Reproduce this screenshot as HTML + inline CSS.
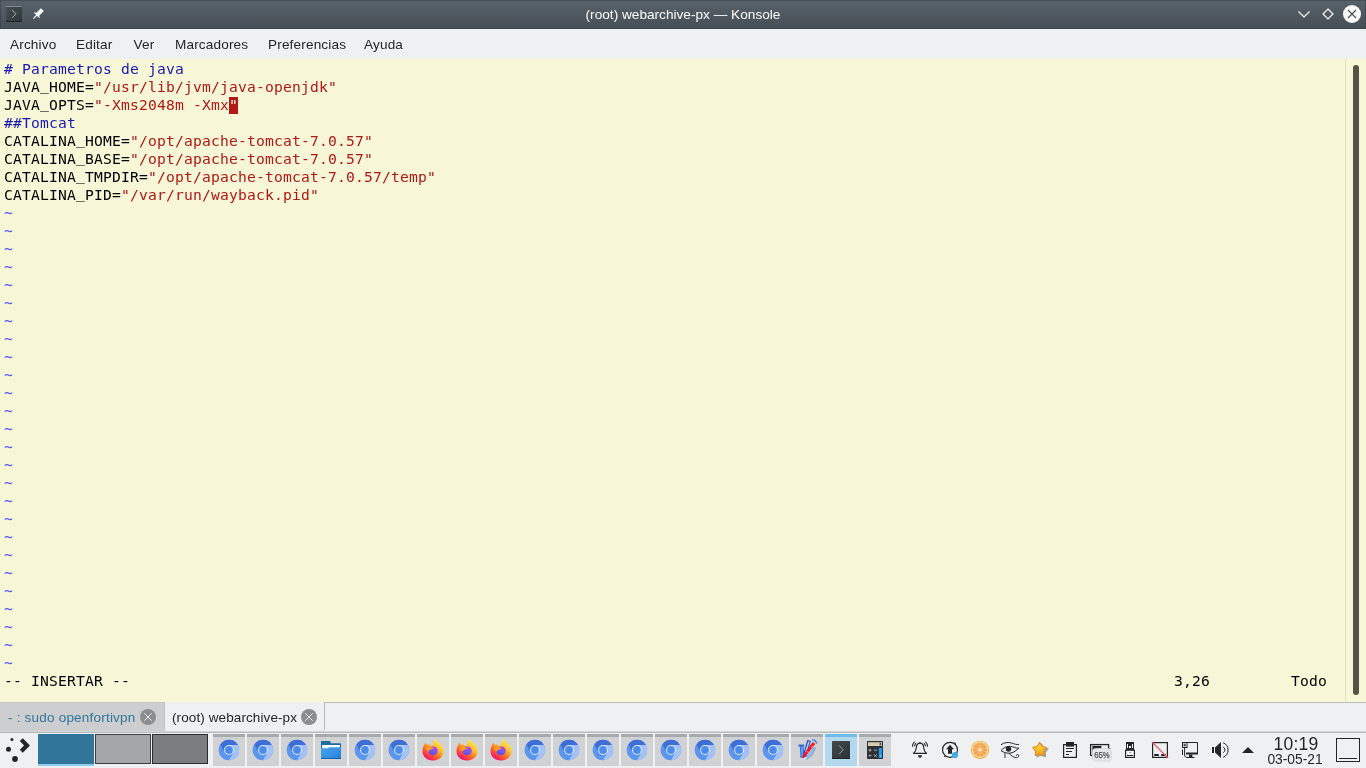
<!DOCTYPE html>
<html lang="es">
<head>
<meta charset="utf-8">
<title>(root) webarchive-px — Konsole</title>
<style>
html,body{margin:0;padding:0;}
body{width:1366px;height:768px;overflow:hidden;background:#eff0f1;position:relative;font-family:"Liberation Sans","DejaVu Sans",sans-serif;color:#232627;}
.abs{position:absolute;}
#menubar,#title,#text,.tabtxt,.clk{will-change:transform;}
svg{display:block;overflow:visible;}
#titlebar{left:0;top:0;width:1366px;height:29px;background:linear-gradient(#464f56 0px,#464f56 1px,#566069 1px,#566069 1px,#566069 3px,#475057 27px,#475057 28px,#3f474d 28px,#3f474d 29px);}
#title{left:0;top:1px;width:1366px;height:29px;line-height:28px;text-align:center;color:#fcfcfc;font-size:13.65px;white-space:nowrap;}
#menubar{left:0;top:29px;width:1366px;height:30px;background:#eff0f1;}
.menu{position:absolute;top:1px;height:30px;line-height:30px;font-size:13.6px;letter-spacing:0.15px;color:#232627;white-space:nowrap;}
#term{left:0;top:59px;width:1366px;height:643px;background:#f7f7d7;}
#text{left:4px;top:1px;margin:0;font-family:"DejaVu Sans Mono","Liberation Mono",monospace;font-size:14.667px;line-height:18px;color:#000;white-space:pre;letter-spacing:0.1761px;}
.c{color:#1818b2;}
.s{color:#b21818;}
.t{color:#5454ff;}
.cur{background:linear-gradient(#b21818,#b21818) no-repeat 0 1px;padding-bottom:1px;color:#f7f7d7;}
.u{position:relative;top:-2px;}
#sbline{left:1345px;top:0;width:1px;height:643px;background:#e2e2c5;}
#sbhandle{left:1353px;top:6px;width:6px;height:630px;border-radius:3px;background:#545446;}
#tabbar{left:0;top:702px;width:1366px;height:31px;background:#eff0f1;}
.tabtxt{position:absolute;top:1px;height:29px;line-height:29px;font-size:13.5px;white-space:nowrap;}
#panel{left:0;top:733px;width:1366px;height:35px;background:#eff0f1;}
.task{position:absolute;top:734px;width:32px;height:32px;background:#d1d2d3;border-top:3px solid #a8a9aa;box-sizing:border-box;}
.task.act{background:#b4d9ee;border-top-color:#6cbde9;}
</style>
</head>
<body>
<svg class="abs" style="left:0;top:0" width="0" height="0"><defs>
<linearGradient id="ffA" x1="0.85" y1="0.1" x2="0.25" y2="0.95"><stop offset="0" stop-color="#fff04a"/><stop offset="0.35" stop-color="#ffbd2f"/><stop offset="0.6" stop-color="#ff7a22"/><stop offset="0.85" stop-color="#ff3647"/><stop offset="1" stop-color="#e8107a"/></linearGradient>
<linearGradient id="ffB" x1="0.7" y1="0" x2="0.3" y2="1"><stop offset="0" stop-color="#c436e0"/><stop offset="0.5" stop-color="#7a5be8"/><stop offset="1" stop-color="#5b4be0"/></linearGradient>
<linearGradient id="ffC" x1="0" y1="0" x2="1" y2="1"><stop offset="0" stop-color="#ff8a16"/><stop offset="1" stop-color="#ffb82a"/></linearGradient>
<linearGradient id="foA" x1="0" y1="0" x2="1" y2="1"><stop offset="0" stop-color="#4aa3ec"/><stop offset="1" stop-color="#2383dd"/></linearGradient>
<linearGradient id="koA" x1="0" y1="0" x2="1" y2="1"><stop offset="0" stop-color="#434b4e"/><stop offset="1" stop-color="#2c3134"/></linearGradient>
</defs></svg>
<div id="titlebar" class="abs"></div>
<div class="abs" style="left:0;top:0;width:1px;height:28px;background:rgba(40,46,52,0.35)"></div>
<div class="abs" style="left:1365px;top:0;width:1px;height:28px;background:rgba(40,46,52,0.35)"></div>
<svg class="abs" style="left:0;top:0" width="60" height="29" viewBox="0 0 60 29">
<defs><linearGradient id="kt" x1="0" y1="0" x2="1" y2="1"><stop offset="0" stop-color="#495254"/><stop offset="1" stop-color="#2e3336"/></linearGradient></defs>
<rect x="6" y="6" width="16" height="16" fill="url(#kt)"/>
<rect x="6" y="6" width="16" height="1" fill="#818b88"/>
<rect x="6" y="21" width="16" height="1" fill="#202325"/>
<path d="M12.2 10L16 13.9L12.2 17.8" fill="none" stroke="#a4a9a9" stroke-width="1"/>
<g transform="translate(37 15) rotate(45)" fill="#fcfcfc"><rect x="-2.05" y="-7.6" width="4.1" height="7.6"/><rect x="-3.7" y="-0.6" width="7.4" height="1.2"/><rect x="-0.6" y="0" width="1.2" height="5.2"/></g>
</svg>
<div id="title" class="abs">(root) webarchive-px — Konsole</div>
<svg class="abs" style="left:1290px;top:0" width="76" height="29" viewBox="1290 0 76 29">
<path d="M1298.5 11.5L1304 17L1309.500 11.500" fill="none" stroke="#fcfcfc" stroke-width="1.2"/>
<path d="M1328 9L1333 14L1328 19L1323 14Z" fill="none" stroke="#fcfcfc" stroke-width="1.2"/>
<circle cx="1352" cy="14" r="9" fill="#fcfcfc"/>
<path d="M1348 10L1356 18M1356 10L1348 18" fill="none" stroke="#475057" stroke-width="1.2"/>
</svg>
<div id="menubar" class="abs">
<span class="menu" style="left:10px">Archivo</span>
<span class="menu" style="left:76px">Editar</span>
<span class="menu" style="left:133.500px">Ver</span>
<span class="menu" style="left:175px">Marcadores</span>
<span class="menu" style="left:268px">Preferencias</span>
<span class="menu" style="left:364px">Ayuda</span>
</div>
<div id="term" class="abs">
<pre id="text" class="abs"><span class="c"># Parametros de java</span>
JAVA<span class="u">_</span>HOME=<span class="s">"/usr/lib/jvm/java-openjdk"</span>
JAVA<span class="u">_</span>OPTS=<span class="s">"-Xms2048m -Xmx</span><span class="cur">"</span>
<span class="c">##Tomcat</span>
CATALINA<span class="u">_</span>HOME=<span class="s">"/opt/apache-tomcat-7.0.57"</span>
CATALINA<span class="u">_</span>BASE=<span class="s">"/opt/apache-tomcat-7.0.57"</span>
CATALINA<span class="u">_</span>TMPDIR=<span class="s">"/opt/apache-tomcat-7.0.57/temp"</span>
CATALINA<span class="u">_</span>PID=<span class="s">"/var/run/wayback.pid"</span>
<span class="t">~
~
~
~
~
~
~
~
~
~
~
~
~
~
~
~
~
~
~
~
~
~
~
~
~
~</span>
-- INSERTAR --                                                                                                                    3,26         Todo</pre>
<div id="sbline" class="abs"></div>
<div id="sbhandle" class="abs"></div>
</div>
<div id="tabbar" class="abs">
<div class="abs" style="left:0;top:0;width:1366px;height:1px;background:#bcbdbf"></div>
<div class="abs" style="left:0;top:0;width:165px;height:29px;background:#cdcecf;border-top:1px solid #c4c5c6;box-sizing:border-box"></div>
<div class="abs" style="left:164px;top:0;width:161px;height:29px;background:#eff0f1;border-radius:0 0 3px 3px;border-left:1px solid #c2c3c4;border-right:1px solid #b6b7b8;box-sizing:border-box"></div>
<div class="abs" style="left:0;top:29px;width:1366px;height:1px;background:#d4d5d6"></div>
<div class="abs" style="left:0;top:30px;width:1366px;height:1px;background:#b8b9ba"></div>
<span class="tabtxt" style="left:7.800px;color:#31759b;letter-spacing:0.21px">- : sudo openfortivpn</span>
<span class="tabtxt" style="left:172px;color:#232627;letter-spacing:0.1px">(root) webarchive-px</span>
<svg class="abs" style="left:140px;top:7px" width="16" height="16" viewBox="0 0 16 16"><circle cx="8" cy="8" r="8" fill="#8c8d8e"/><path d="M4.300 4.300L11.700 11.700M11.700 4.300L4.300 11.700" stroke="#f0f0f0" stroke-width="1"/></svg>
<svg class="abs" style="left:301px;top:7px" width="16" height="16" viewBox="0 0 16 16"><circle cx="8" cy="8" r="8" fill="#8c8d8e"/><path d="M4.300 4.300L11.700 11.700M11.700 4.300L4.300 11.700" stroke="#f0f0f0" stroke-width="1"/></svg>
</div>
<div id="panel" class="abs"></div>
<svg class="abs" style="left:0;top:733px" width="38" height="35" viewBox="0 733 38 35">
<circle cx="11.950" cy="739.500" r="1.500" fill="#232627"/><circle cx="8.500" cy="749.300" r="2.500" fill="#232627"/><circle cx="15" cy="759" r="2.900" fill="#232627"/>
<path d="M21.300 739.600L27 745.500L21.300 751.300" fill="none" stroke="#232627" stroke-width="4.200" stroke-linejoin="miter"/>
</svg>
<div class="abs" style="left:38px;top:734px;width:56px;height:30px;background:#31759b"></div>
<div class="abs" style="left:38px;top:764px;width:56px;height:2px;background:#8fcdee"></div>
<div class="abs" style="left:95px;top:734px;width:56px;height:30px;background:#a4a5a6;border:1px solid #3c3f41;box-sizing:border-box"></div>
<div class="abs" style="left:152px;top:734px;width:56px;height:30px;background:#7c7d80;border:1px solid #2a2d2f;box-sizing:border-box"></div>
<div class="task" style="left:213px"></div>
<svg class="abs" style="left:218px;top:739px" width="22" height="22" viewBox="-11 -11 22 22"><circle r="10.2" fill="#5c95ee"/><path d="M-8.75 -5.25A10.2 10.2 0 0 1 8.92 -4.95L-0.02 -4.97L0 0L-4.30 2.50Z" fill="#3e6fd8"/><path d="M8.92 -4.95A10.2 10.2 0 0 1 -0.17 10.20L4.32 2.47L0 0L-0.02 -4.97Z" fill="#a4c2f7"/><path d="M-0.17 10.20A10.2 10.2 0 0 1 -8.75 -5.25L-4.30 2.50L0 0L4.32 2.47Z" fill="#5c95ee"/><circle r="4.9" fill="#e4ecfb"/><circle r="3.9" fill="#4a8bf0"/></svg>
<div class="task" style="left:247px"></div>
<svg class="abs" style="left:252px;top:739px" width="22" height="22" viewBox="-11 -11 22 22"><circle r="10.2" fill="#5c95ee"/><path d="M-8.75 -5.25A10.2 10.2 0 0 1 8.92 -4.95L-0.02 -4.97L0 0L-4.30 2.50Z" fill="#3e6fd8"/><path d="M8.92 -4.95A10.2 10.2 0 0 1 -0.17 10.20L4.32 2.47L0 0L-0.02 -4.97Z" fill="#a4c2f7"/><path d="M-0.17 10.20A10.2 10.2 0 0 1 -8.75 -5.25L-4.30 2.50L0 0L4.32 2.47Z" fill="#5c95ee"/><circle r="4.9" fill="#e4ecfb"/><circle r="3.9" fill="#4a8bf0"/></svg>
<div class="task" style="left:281px"></div>
<svg class="abs" style="left:286px;top:739px" width="22" height="22" viewBox="-11 -11 22 22"><circle r="10.2" fill="#5c95ee"/><path d="M-8.75 -5.25A10.2 10.2 0 0 1 8.92 -4.95L-0.02 -4.97L0 0L-4.30 2.50Z" fill="#3e6fd8"/><path d="M8.92 -4.95A10.2 10.2 0 0 1 -0.17 10.20L4.32 2.47L0 0L-0.02 -4.97Z" fill="#a4c2f7"/><path d="M-0.17 10.20A10.2 10.2 0 0 1 -8.75 -5.25L-4.30 2.50L0 0L4.32 2.47Z" fill="#5c95ee"/><circle r="4.9" fill="#e4ecfb"/><circle r="3.9" fill="#4a8bf0"/></svg>
<div class="task" style="left:315px"></div>
<svg class="abs" style="left:320px;top:739px" width="22" height="22" viewBox="0 0 22 22"><path d="M1 2H10L11 4.2H21V20H1Z" fill="#1f6da3"/><rect x="2.2" y="6" width="17.6" height="4" fill="#ffffff"/><path d="M1 9.2H8L9 8.2H21V20H1Z" fill="url(#foA)"/><rect x="1" y="19" width="20" height="1" fill="#0f5fa8"/></svg>
<div class="task" style="left:349px"></div>
<svg class="abs" style="left:354px;top:739px" width="22" height="22" viewBox="-11 -11 22 22"><circle r="10.2" fill="#5c95ee"/><path d="M-8.75 -5.25A10.2 10.2 0 0 1 8.92 -4.95L-0.02 -4.97L0 0L-4.30 2.50Z" fill="#3e6fd8"/><path d="M8.92 -4.95A10.2 10.2 0 0 1 -0.17 10.20L4.32 2.47L0 0L-0.02 -4.97Z" fill="#a4c2f7"/><path d="M-0.17 10.20A10.2 10.2 0 0 1 -8.75 -5.25L-4.30 2.50L0 0L4.32 2.47Z" fill="#5c95ee"/><circle r="4.9" fill="#e4ecfb"/><circle r="3.9" fill="#4a8bf0"/></svg>
<div class="task" style="left:383px"></div>
<svg class="abs" style="left:388px;top:739px" width="22" height="22" viewBox="-11 -11 22 22"><circle r="10.2" fill="#5c95ee"/><path d="M-8.75 -5.25A10.2 10.2 0 0 1 8.92 -4.95L-0.02 -4.97L0 0L-4.30 2.50Z" fill="#3e6fd8"/><path d="M8.92 -4.95A10.2 10.2 0 0 1 -0.17 10.20L4.32 2.47L0 0L-0.02 -4.97Z" fill="#a4c2f7"/><path d="M-0.17 10.20A10.2 10.2 0 0 1 -8.75 -5.25L-4.30 2.50L0 0L4.32 2.47Z" fill="#5c95ee"/><circle r="4.9" fill="#e4ecfb"/><circle r="3.9" fill="#4a8bf0"/></svg>
<div class="task" style="left:417px"></div>
<svg class="abs" style="left:422px;top:738.5px" width="22" height="22" viewBox="0 0 22 22"><g transform="translate(11 11) scale(1.09 1) translate(-11.2 -11)"><path d="M11.6 4.2C11.2 2.6 12.2 1 13.6 0.4C14.6 2.6 17 3.6 18.8 6C20.6 8.4 21.4 11.4 20.6 14.4C19.4 18.8 15.4 21.4 11 21.4C5.6 21.4 1.6 17.4 1.6 12.2C1.6 10.2 1.8 8.6 2.6 7C3 5.6 3.8 4.4 4.6 3.8C4.8 4.8 5.2 5.6 5.8 6.2C6.4 5.4 7.2 5 8 5.2C8.4 6.2 9.2 7 10.4 7.2Z" fill="url(#ffA)"/><circle cx="11.2" cy="11.8" r="4.4" fill="url(#ffB)"/><path d="M4.2 8.4C5.6 7.4 7.4 7.4 8.6 8C9.6 8.6 10.6 8.8 12 8.8C11.4 9.8 10.2 10.2 9 10.6C8 11 7.4 11.8 7.2 12.8C6.4 11.4 5.4 10.2 3.8 10.2Z" fill="url(#ffC)"/></g></svg>
<div class="task" style="left:451px"></div>
<svg class="abs" style="left:456px;top:738.5px" width="22" height="22" viewBox="0 0 22 22"><g transform="translate(11 11) scale(1.09 1) translate(-11.2 -11)"><path d="M11.6 4.2C11.2 2.6 12.2 1 13.6 0.4C14.6 2.6 17 3.6 18.8 6C20.6 8.4 21.4 11.4 20.6 14.4C19.4 18.8 15.4 21.4 11 21.4C5.6 21.4 1.6 17.4 1.6 12.2C1.6 10.2 1.8 8.6 2.6 7C3 5.6 3.8 4.4 4.6 3.8C4.8 4.8 5.2 5.6 5.8 6.2C6.4 5.4 7.2 5 8 5.2C8.4 6.2 9.2 7 10.4 7.2Z" fill="url(#ffA)"/><circle cx="11.2" cy="11.8" r="4.4" fill="url(#ffB)"/><path d="M4.2 8.4C5.6 7.4 7.4 7.4 8.6 8C9.6 8.6 10.6 8.8 12 8.8C11.4 9.8 10.2 10.2 9 10.6C8 11 7.4 11.8 7.2 12.8C6.4 11.4 5.4 10.2 3.8 10.2Z" fill="url(#ffC)"/></g></svg>
<div class="task" style="left:485px"></div>
<svg class="abs" style="left:490px;top:738.5px" width="22" height="22" viewBox="0 0 22 22"><g transform="translate(11 11) scale(1.09 1) translate(-11.2 -11)"><path d="M11.6 4.2C11.2 2.6 12.2 1 13.6 0.4C14.6 2.6 17 3.6 18.8 6C20.6 8.4 21.4 11.4 20.6 14.4C19.4 18.8 15.4 21.4 11 21.4C5.6 21.4 1.6 17.4 1.6 12.2C1.6 10.2 1.8 8.6 2.6 7C3 5.6 3.8 4.4 4.6 3.8C4.8 4.8 5.2 5.6 5.8 6.2C6.4 5.4 7.2 5 8 5.2C8.4 6.2 9.2 7 10.4 7.2Z" fill="url(#ffA)"/><circle cx="11.2" cy="11.8" r="4.4" fill="url(#ffB)"/><path d="M4.2 8.4C5.6 7.4 7.4 7.4 8.6 8C9.6 8.6 10.6 8.8 12 8.8C11.4 9.8 10.2 10.2 9 10.6C8 11 7.4 11.8 7.2 12.8C6.4 11.4 5.4 10.2 3.8 10.2Z" fill="url(#ffC)"/></g></svg>
<div class="task" style="left:519px"></div>
<svg class="abs" style="left:524px;top:739px" width="22" height="22" viewBox="-11 -11 22 22"><circle r="10.2" fill="#5c95ee"/><path d="M-8.75 -5.25A10.2 10.2 0 0 1 8.92 -4.95L-0.02 -4.97L0 0L-4.30 2.50Z" fill="#3e6fd8"/><path d="M8.92 -4.95A10.2 10.2 0 0 1 -0.17 10.20L4.32 2.47L0 0L-0.02 -4.97Z" fill="#a4c2f7"/><path d="M-0.17 10.20A10.2 10.2 0 0 1 -8.75 -5.25L-4.30 2.50L0 0L4.32 2.47Z" fill="#5c95ee"/><circle r="4.9" fill="#e4ecfb"/><circle r="3.9" fill="#4a8bf0"/></svg>
<div class="task" style="left:553px"></div>
<svg class="abs" style="left:558px;top:739px" width="22" height="22" viewBox="-11 -11 22 22"><circle r="10.2" fill="#5c95ee"/><path d="M-8.75 -5.25A10.2 10.2 0 0 1 8.92 -4.95L-0.02 -4.97L0 0L-4.30 2.50Z" fill="#3e6fd8"/><path d="M8.92 -4.95A10.2 10.2 0 0 1 -0.17 10.20L4.32 2.47L0 0L-0.02 -4.97Z" fill="#a4c2f7"/><path d="M-0.17 10.20A10.2 10.2 0 0 1 -8.75 -5.25L-4.30 2.50L0 0L4.32 2.47Z" fill="#5c95ee"/><circle r="4.9" fill="#e4ecfb"/><circle r="3.9" fill="#4a8bf0"/></svg>
<div class="task" style="left:587px"></div>
<svg class="abs" style="left:592px;top:739px" width="22" height="22" viewBox="-11 -11 22 22"><circle r="10.2" fill="#5c95ee"/><path d="M-8.75 -5.25A10.2 10.2 0 0 1 8.92 -4.95L-0.02 -4.97L0 0L-4.30 2.50Z" fill="#3e6fd8"/><path d="M8.92 -4.95A10.2 10.2 0 0 1 -0.17 10.20L4.32 2.47L0 0L-0.02 -4.97Z" fill="#a4c2f7"/><path d="M-0.17 10.20A10.2 10.2 0 0 1 -8.75 -5.25L-4.30 2.50L0 0L4.32 2.47Z" fill="#5c95ee"/><circle r="4.9" fill="#e4ecfb"/><circle r="3.9" fill="#4a8bf0"/></svg>
<div class="task" style="left:621px"></div>
<svg class="abs" style="left:626px;top:739px" width="22" height="22" viewBox="-11 -11 22 22"><circle r="10.2" fill="#5c95ee"/><path d="M-8.75 -5.25A10.2 10.2 0 0 1 8.92 -4.95L-0.02 -4.97L0 0L-4.30 2.50Z" fill="#3e6fd8"/><path d="M8.92 -4.95A10.2 10.2 0 0 1 -0.17 10.20L4.32 2.47L0 0L-0.02 -4.97Z" fill="#a4c2f7"/><path d="M-0.17 10.20A10.2 10.2 0 0 1 -8.75 -5.25L-4.30 2.50L0 0L4.32 2.47Z" fill="#5c95ee"/><circle r="4.9" fill="#e4ecfb"/><circle r="3.9" fill="#4a8bf0"/></svg>
<div class="task" style="left:655px"></div>
<svg class="abs" style="left:660px;top:739px" width="22" height="22" viewBox="-11 -11 22 22"><circle r="10.2" fill="#5c95ee"/><path d="M-8.75 -5.25A10.2 10.2 0 0 1 8.92 -4.95L-0.02 -4.97L0 0L-4.30 2.50Z" fill="#3e6fd8"/><path d="M8.92 -4.95A10.2 10.2 0 0 1 -0.17 10.20L4.32 2.47L0 0L-0.02 -4.97Z" fill="#a4c2f7"/><path d="M-0.17 10.20A10.2 10.2 0 0 1 -8.75 -5.25L-4.30 2.50L0 0L4.32 2.47Z" fill="#5c95ee"/><circle r="4.9" fill="#e4ecfb"/><circle r="3.9" fill="#4a8bf0"/></svg>
<div class="task" style="left:689px"></div>
<svg class="abs" style="left:694px;top:739px" width="22" height="22" viewBox="-11 -11 22 22"><circle r="10.2" fill="#5c95ee"/><path d="M-8.75 -5.25A10.2 10.2 0 0 1 8.92 -4.95L-0.02 -4.97L0 0L-4.30 2.50Z" fill="#3e6fd8"/><path d="M8.92 -4.95A10.2 10.2 0 0 1 -0.17 10.20L4.32 2.47L0 0L-0.02 -4.97Z" fill="#a4c2f7"/><path d="M-0.17 10.20A10.2 10.2 0 0 1 -8.75 -5.25L-4.30 2.50L0 0L4.32 2.47Z" fill="#5c95ee"/><circle r="4.9" fill="#e4ecfb"/><circle r="3.9" fill="#4a8bf0"/></svg>
<div class="task" style="left:723px"></div>
<svg class="abs" style="left:728px;top:739px" width="22" height="22" viewBox="-11 -11 22 22"><circle r="10.2" fill="#5c95ee"/><path d="M-8.75 -5.25A10.2 10.2 0 0 1 8.92 -4.95L-0.02 -4.97L0 0L-4.30 2.50Z" fill="#3e6fd8"/><path d="M8.92 -4.95A10.2 10.2 0 0 1 -0.17 10.20L4.32 2.47L0 0L-0.02 -4.97Z" fill="#a4c2f7"/><path d="M-0.17 10.20A10.2 10.2 0 0 1 -8.75 -5.25L-4.30 2.50L0 0L4.32 2.47Z" fill="#5c95ee"/><circle r="4.9" fill="#e4ecfb"/><circle r="3.9" fill="#4a8bf0"/></svg>
<div class="task" style="left:757px"></div>
<svg class="abs" style="left:762px;top:739px" width="22" height="22" viewBox="-11 -11 22 22"><circle r="10.2" fill="#5c95ee"/><path d="M-8.75 -5.25A10.2 10.2 0 0 1 8.92 -4.95L-0.02 -4.97L0 0L-4.30 2.50Z" fill="#3e6fd8"/><path d="M8.92 -4.95A10.2 10.2 0 0 1 -0.17 10.20L4.32 2.47L0 0L-0.02 -4.97Z" fill="#a4c2f7"/><path d="M-0.17 10.20A10.2 10.2 0 0 1 -8.75 -5.25L-4.30 2.50L0 0L4.32 2.47Z" fill="#5c95ee"/><circle r="4.9" fill="#e4ecfb"/><circle r="3.9" fill="#4a8bf0"/></svg>
<div class="task" style="left:791px"></div>
<svg class="abs" style="left:796px;top:739px" width="22" height="22" viewBox="0 0 22 22"><g fill="none" stroke-linecap="butt"><path d="M16.200 0.700C18.400 0.900 20.300 2.500 20.700 4.700" stroke="#4a7fe0" stroke-width="1.500"/><path d="M18.300 8.300C17 12.800 13.700 17 9.700 19.700" stroke="#4e5f78" stroke-width="3.300" opacity="0.55"/><path d="M17.900 8C16.600 12.400 13.400 16.600 9.400 19.300" stroke="#8cbdf5" stroke-width="2.700"/><path d="M2.400 6.500H8.200" stroke="#3468dc" stroke-width="1.900"/><path d="M5.500 6.500C6 10 6.200 14 6.300 18.600" stroke="#2f63d8" stroke-width="3.700"/><path d="M5.500 7.500C6 10 6.200 14 6.300 17.800" stroke="#62a0f0" stroke-width="1.900"/><path d="M13.100 1.500L8.200 18" stroke="#2346c8" stroke-width="3.700"/><path d="M12.900 2.600L8.600 16.800" stroke="#bcd6fb" stroke-width="1.500"/><path d="M7.500 19.200L9.400 15.200L18 4" stroke="#f21824" stroke-width="3" stroke-linejoin="round"/><path d="M15.400 8.400L16.600 7.400M11 12.400L11.800 13.400" stroke="#fbd0d4" stroke-width="0.900"/></g><path d="M7.200 19.900L9.800 20.300L11.400 18.200L8.800 18Z" fill="#c4e8fb"/></svg>
<div class="task act" style="left:825px"></div>
<svg class="abs" style="left:830px;top:739px" width="22" height="22" viewBox="0 0 22 22"><rect x="2" y="2" width="18" height="18" rx="0.8" fill="url(#koA)"/><rect x="2" y="19" width="18" height="1" fill="#1d2022"/><path d="M9 6.5L13.2 10.8L9 15.2" fill="none" stroke="#a4a9a9" stroke-width="0.900"/></svg>
<div class="task" style="left:859px"></div>
<svg class="abs" style="left:864px;top:739px" width="22" height="22" viewBox="0 0 22 22"><rect x="3" y="2" width="16" height="18" rx="0.8" fill="#2e3236"/><rect x="4" y="3.2" width="14" height="3.8" fill="#d6ccb4"/><rect x="15.6" y="3.8" width="1.6" height="2.6" fill="#4a4a44"/><rect x="14.8" y="9" width="3.2" height="10" fill="#1d99f3"/><rect x="15.8" y="16.2" width="1.2" height="1.2" fill="#bfe3fb"/><path d="M4.6 11.2H7.4M6 9.8V12.6M10 11.2H12.8M4.6 16.6H7.4M6 15.4V15.9M6 17.3V17.8M10.2 15.4L12.6 17.8M12.6 15.4L10.2 17.8" stroke="#c9cdcd" stroke-width="0.800" fill="none"/></svg>
<svg class="abs" style="left:900px;top:733px" width="466" height="35" viewBox="900 733 466 35">
<g fill="none" stroke="#232627" stroke-width="1.150">
<path d="M913.500 753.300C915.600 751.600 916.200 749.600 916.400 747.200C916.600 744.600 918 743.100 920 743.100C922 743.100 923.400 744.600 923.600 747.200C923.800 749.600 924.400 751.600 926.500 753.300Z" stroke-linejoin="round"/>
<path d="M914.700 746.300C914.700 745 915.200 743.900 916 743.100M912.500 746.700C912.500 744.700 913.300 742.900 914.600 741.600M925.300 746.300C925.300 745 924.800 743.900 924 743.100M927.500 746.700C927.500 744.700 926.700 742.900 925.400 741.600" stroke-width="1.100"/>
</g>
<path d="M919.100 743.200L920 741.800L920.900 743.200Z" fill="#232627"/>
<path d="M918 755.300H922A2 2.500 0 0 1 918 755.300Z" fill="#232627"/>
<circle cx="950" cy="749.800" r="7.500" fill="none" stroke="#232627" stroke-width="1.150"/>
<path d="M954.200 742.200L956.200 743L954.600 744.400ZM945.800 757.400L943.800 756.600L945.400 755.200Z" fill="#232627"/>
<path d="M950 744.800L954 749.200H952V753.800H948V749.200H946Z" fill="#232627"/>
<circle cx="955" cy="755" r="3.100" fill="#3daee9"/>
<circle cx="980" cy="749.800" r="9.100" fill="#f0a638"/><circle cx="980" cy="749.800" r="8.200" fill="#fde8b0"/><circle cx="980" cy="749.800" r="7" fill="#f89c47"/>
<path d="M973.44 747.67L986.56 751.93M975.94 744.22L984.06 755.38M980.00 742.90L980.00 756.70M984.06 744.22L975.94 755.38M986.56 747.67L973.44 751.93" stroke="#fbc78e" stroke-width="0.900" fill="none"/>
<circle cx="980" cy="749.800" r="1.800" fill="#fde3b4"/>
<g fill="none" stroke="#232627" stroke-width="1">
<path d="M1001 744.800C1004 742.600 1008 741.800 1011.500 743C1014 743.800 1016.500 744.800 1019 744.600"/>
<path d="M1001 750.600C1003.500 747.600 1007 746 1010.500 746.400C1013.500 746.700 1016 748.400 1019 748.200"/>
<path d="M1001 750.600C1004 752.600 1007.500 753.800 1011 753C1014 752.300 1016.500 750.200 1019 748.200"/>
<path d="M1009 753.200C1011 755.600 1013.500 757.600 1016.500 757.600C1018.400 757.600 1019.300 756 1018.400 754.900C1017.600 754 1016.200 754.600 1016.400 755.700"/>
</g>
<circle cx="1008.500" cy="749" r="2.700" fill="#232627"/>
<rect x="1004.200" y="753" width="1.600" height="5" fill="#7a7c7e"/>
<defs><linearGradient id="stA" x1="0" y1="0" x2="0" y2="1"><stop offset="0" stop-color="#fee256"/><stop offset="0.5" stop-color="#fcc12c"/><stop offset="1" stop-color="#f89c18"/></linearGradient></defs>
<path d="M1041.20 744.00L1043.61 747.68L1047.86 748.84L1045.10 752.27L1045.31 756.66L1041.20 755.10L1037.09 756.66L1037.30 752.27L1034.54 748.84L1038.79 747.68Z" fill="#707274" opacity="0.6" stroke="#707274" stroke-width="1.400" stroke-linejoin="round" style="filter:blur(0.700px)"/>
<path d="M1039.60 742.50L1042.07 746.30L1046.45 747.48L1043.59 751.00L1043.83 755.52L1039.60 753.90L1035.37 755.52L1035.61 751.00L1032.75 747.48L1037.13 746.30Z" fill="url(#stA)" stroke="#e48c18" stroke-width="1.100" stroke-linejoin="round"/>
<rect x="1063.600" y="744.600" width="12.800" height="12.800" fill="none" stroke="#232627" stroke-width="1.200"/>
<rect x="1066" y="742" width="8" height="4.600" fill="#232627"/>
<path d="M1066 748.500H1074M1066 751.500H1072M1066 754.500H1069" stroke="#232627" stroke-width="1" fill="none"/>
<rect x="1090.600" y="744.600" width="18" height="10.800" fill="none" stroke="#232627" stroke-width="1.300"/>
<rect x="1109" y="748" width="1.400" height="4" fill="#232627"/>
<rect x="1092.400" y="745.900" width="9" height="7" fill="#232627"/>
<rect x="1092.500" y="748.500" width="19" height="12.500" rx="3" fill="#e6e7e8" stroke="#d3d4d5" stroke-width="0.800"/>
<text x="1094.200" y="757.800" font-family="'Liberation Sans','DejaVu Sans',sans-serif" font-size="8.600" fill="#53565a" stroke="#53565a" stroke-width="0.250" textLength="15.500" lengthAdjust="spacingAndGlyphs">65%</text>
<rect x="1126" y="742" width="8" height="8" fill="#232627"/>
<rect x="1127" y="744" width="1" height="4" fill="#f4f5f5"/><rect x="1132" y="744" width="1" height="4" fill="#f4f5f5"/><rect x="1129" y="746" width="2" height="2" fill="#fcfcfc"/>
<rect x="1125.600" y="750.200" width="8.800" height="7.200" fill="#fafafa" stroke="#232627" stroke-width="1.200"/>
<rect x="1127" y="755" width="6" height="1" fill="#232627"/><rect x="1129" y="752" width="2" height="0.800" fill="#8f9193"/>
<rect x="1152.600" y="742.600" width="14.800" height="14.800" fill="none" stroke="#232627" stroke-width="1.200"/>
<path d="M1154.200 755H1158.800M1161.200 755H1165.800" stroke="#232627" stroke-width="1.800" fill="none"/>
<path d="M1152 742L1168 758" stroke="#ee5a68" stroke-width="1.300" fill="none"/>
<path d="M1187 742.500H1197.500V753.500H1186.500" fill="none" stroke="#232627" stroke-width="1"/>
<rect x="1186" y="752.500" width="12" height="2" fill="#232627"/>
<rect x="1189" y="754.500" width="3.400" height="2.600" fill="#232627"/><rect x="1186.500" y="757" width="8" height="1" fill="#232627"/>
<rect x="1182.500" y="742.500" width="4.500" height="5" fill="#eff0f1" stroke="#232627" stroke-width="1"/>
<rect x="1184" y="744" width="1.400" height="2" fill="none" stroke="#232627" stroke-width="0.600"/>
<path d="M1184.600 747.500V755C1184.600 757 1186 757.500 1188.500 757.500M1182.500 749.500V755" fill="none" stroke="#232627" stroke-width="1"/>
<rect x="1212" y="747" width="2" height="6" fill="#232627"/>
<path d="M1215 747.400L1221 742V758L1215 752.600Z" fill="#232627"/>
<path d="M1223.200 747A3.100 3.100 0 0 1 1223.200 752.600M1223.200 742.800A7.740 7.740 0 0 1 1223.200 757.200" fill="none" stroke="#232627" stroke-width="1"/>
<path d="M1248 747L1254 753H1242Z" fill="#232627"/>
<rect x="1336.500" y="738.500" width="23" height="23" fill="none" stroke="#232627" stroke-width="1"/>
<rect x="1339" y="758" width="18" height="1" fill="#232627"/>
</svg>
<div class="abs clk" style="left:1246px;top:735px;width:100px;height:18px;line-height:18px;text-align:center;font-size:17.5px;letter-spacing:0.25px;color:#232627;white-space:nowrap">10:19</div>
<div class="abs clk" style="left:1244.500px;top:751.500px;width:100px;height:16px;line-height:16px;text-align:center;font-size:13.8px;letter-spacing:0px;color:#232627;white-space:nowrap">03-05-21</div>
</body>
</html>
